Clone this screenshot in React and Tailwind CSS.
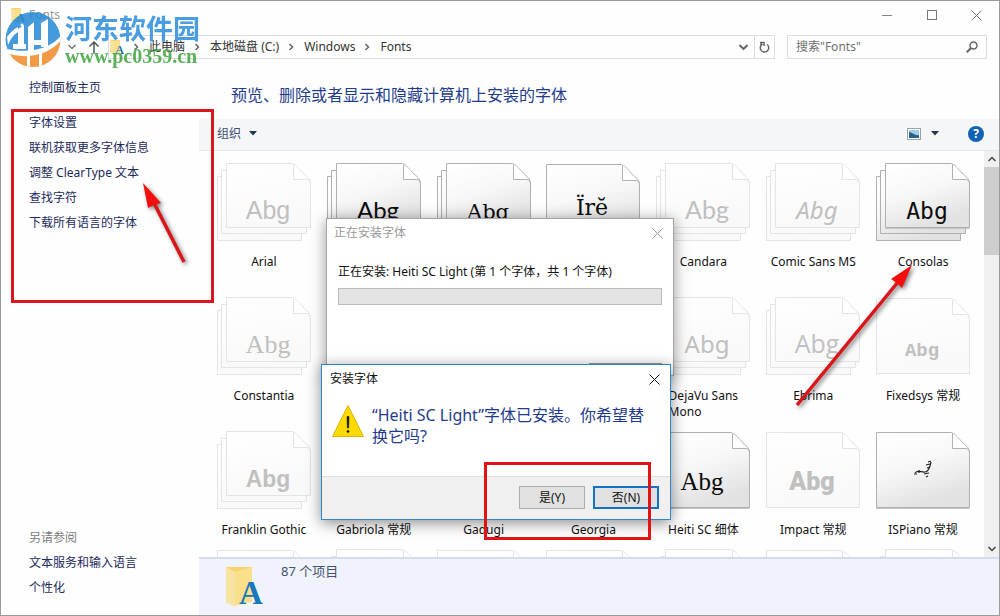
import React from "react";

const tasks = ["字体设置", "联机获取更多字体信息", "调整 ClearType 文本", "查找字符", "下载所有语言的字体"];
const related = ["文本服务和输入语言", "个性化"];
const crumbs = ["此电脑", "本地磁盘 (C:)", "Windows", "Fonts"];

const sans = "'Liberation Sans', sans-serif";
const humanist = "'Noto Sans', sans-serif";
const open = "'Open Sans', sans-serif";
const lato = "Lato, sans-serif";
const serif = "'Liberation Serif', serif";
const slab = "'DejaVu Serif', serif";
const mono = "'Liberation Mono', monospace";

const fonts = [
  { name: "Arial", family: sans, stack: true },
  { name: "Calibri", family: lato, stack: true, active: true, size: 24 },
  { name: "Cambria", family: slab, stack: true, active: true, size: 21 },
  { name: "Cambria\nMath 常规", family: slab, active: true, sample: "Ïrĕ", size: 22, baseline: 52 },
  { name: "Candara", family: lato, stack: true },
  { name: "Comic Sans MS", family: humanist, stack: true, italic: true, size: 24 },
  { name: "Consolas", family: "'DejaVu Sans Mono', monospace", stack: true, active: true, size: 23, bold: false },
  { name: "Constantia", family: serif, stack: true, size: 26 },
  { name: "Corbel", family: lato, stack: true },
  { name: "Courier New", family: mono, stack: true },
  { name: "DejaVu Sans", family: humanist, stack: true },
  { name: "DejaVu Sans\nMono", family: humanist, stack: true, size: 24 },
  { name: "Ebrima", family: open, stack: true },
  { name: "Fixedsys 常规", family: mono, bold: true, size: 19 },
  { name: "Franklin Gothic", family: sans, stack: true, bold: true, size: 23 },
  { name: "Gabriola 常规", family: serif },
  { name: "Gadugi", family: open, stack: true },
  { name: "Georgia", family: serif, stack: true },
  { name: "Heiti SC 细体", family: serif, active: true, size: 25 },
  { name: "Impact 常规", family: "Roboto, sans-serif", heavy: true, size: 25 },
  { name: "ISPiano 常规", active: true, piano: true },
  { name: "Javanese Text", family: serif },
  { name: "Leelawadee UI", family: open, stack: true },
  { name: "Lucida Console", family: mono },
  { name: "Lucida Sans", family: sans },
  { name: "Malgun Gothic", family: sans, stack: true },
  { name: "Marlett 常规", family: sans },
  { name: "Microsoft YaHei", family: sans, stack: true },
];

function FontIcon({ font }) {
  const line = font.active ? "#b0b0b0" : "#e4e4e4";
  const fill = font.active ? "url(#paper)" : "url(#paperLight)";
  const ink = font.active ? "#0c0c0c" : "#c0c0c0";
  const weight = font.heavy ? 900 : font.bold ? 700 : 400;
  const drop = font.stack ? 0 : 1;
  return (
    <svg width="94" height="80" viewBox="0 0 94 80" aria-hidden="true">
      <defs>
        <linearGradient id="paper" x1="0" y1="0" x2="0.4" y2="1">
          <stop offset="0" stopColor="#ffffff" />
          <stop offset="0.5" stopColor="#f8f8f8" />
          <stop offset="1" stopColor="#e2e2e2" />
        </linearGradient>
        <linearGradient id="paperLight" x1="0" y1="0" x2="0.3" y2="1">
          <stop offset="0" stopColor="#ffffff" />
          <stop offset="1" stopColor="#f9f9f9" />
        </linearGradient>
      </defs>
      <g fill={fill} stroke={line}>
        {font.stack ? (
          <>
            <path d="M.5 13.500H72L84.500 29V77.500H.5Z" />
            <path d="M4.500 7.500H75L89.500 23V70.500H4.500Z" />
            <path d="M9.500.5H75.500C80 2.500 83 6.500 86 10C89 13 93.500 15 93.500 21V64.500H9.500Z" />
          </>
        ) : (
          <path d="M.5 1.500H75.500C80 3.500 83 7.500 86 11C89 14 93.500 16 93.500 22V76.500H.5Z" />
        )}
      </g>
      <g transform={`translate(0 ${drop})`}>
        <path d="M76.500 1.500V16.500H90C92 17 93 18 93.500 20" fill="none" stroke={line} />
        <path d="M77 2V16H90C87 13 86 11 84 8.500C82 6 80 4 77 2Z" fill="#fff" />
      </g>
      {font.active && <path d={font.stack ? "M9 65.500H93.500" : "M0 77.500H93.500"} stroke="#c4c4c4" />}
      {font.piano ? (
        <g stroke="#222" fill="none">
          <path d="M39 42C42 38 46 42 49 41C51 41 53 38 54 35L55 31" strokeWidth="1.200" />
          <path d="M38 43h3M43 39v3M50 34l4-1M51 37l3-1M48 43l5-1M50 46l2-1M52 31l3-1" strokeWidth="1.200" />
        </g>
      ) : (
        <text
          x={font.stack ? 51 : 46}
          y={font.baseline || (font.stack ? 56 : 59)}
          textAnchor="middle"
          fill={ink}
          fontSize={font.size || 25}
          fontFamily={font.family}
          fontWeight={weight}
          fontStyle={font.italic ? "italic" : "normal"}
        >
          {font.sample || "Abg"}
        </text>
      )}
    </svg>
  );
}

function FolderIcon({ className }) {
  return (
    <svg className={className} viewBox="0 0 38 42" aria-hidden="true">
      <path d="M1 2H27V36H8L1 38Z" fill="#f6d36d" />
      <path d="M9 7L27 2V37L9 41Z" fill="#fae08a" />
      <path d="M1 2L10 7V42L1 37Z" fill="#f9e3a0" />
      <text x="26" y="39" textAnchor="middle" fontSize="33" fontWeight="700" fontFamily="'Liberation Serif', serif" fill="#1878b8">A</text>
    </svg>
  );
}

function Chevron({ className, down }) {
  return (
    <svg className={className} width="8" height="8" viewBox="0 0 8 8" fill="none" stroke="currentColor" strokeWidth="1.500" aria-hidden="true">
      <path d={down ? "M.5 2L4 5.500L7.500 2" : "M2.500 1L5.500 4L2.500 7"} />
    </svg>
  );
}

function Caret() {
  return (
    <svg width="8" height="5" viewBox="0 0 8 5" aria-hidden="true">
      <path d="M0 0H8L4 4.500Z" fill="#22334f" />
    </svg>
  );
}

function Cross({ size }) {
  return (
    <svg width={size} height={size} viewBox="0 0 11 11" stroke="currentColor" fill="none" aria-hidden="true">
      <path d="M.5.5L10.500 10.500M10.500.5L.5 10.500" />
    </svg>
  );
}

function Watermark() {
  return (
    <div className="pointer-events-none absolute top-2.5 left-1 flex gap-0.5 opacity-85">
      <svg width="58" height="58" viewBox="0 0 58 58" aria-hidden="true">
        <defs>
          <clipPath id="disc"><circle cx="28" cy="28.500" r="27.500" /></clipPath>
        </defs>
        <g clipPath="url(#disc)">
          <path d="M0 0H58V22C50 34 30 44 2 38L0 30Z" fill="#2489d4" />
          <path d="M58 27C47 42 26 49 5 43L10 58H58Z" fill="#f08a28" />
          <path d="M2 26C6 21 9 18 13 16V21C8 24 5 29 3 34Z" fill="#fff" />
          <path d="M13 18L19 14V35H13Z" fill="#fff" />
          <path d="M23 16L29 11V29H36V12L43 8V36H36V34H29V40H23Z" fill="#fff" />
          <path d="M8 33H21V38H8Z" fill="#fff" />
          <path d="M22 40H25V58H22ZM34 38H37V58H34Z" fill="#fff" />
        </g>
        <circle cx="17" cy="14" r="1.500" fill="#fff" />
      </svg>
      <div className="flex flex-col pt-1">
        <span className="text-[27px] leading-7 font-bold text-[#2a8ddb]">河东软件园</span>
        <span className="pt-px font-['Liberation_Serif',serif] text-[20px] leading-6 font-bold text-[#3fa43f]">www.pc0359.cn</span>
      </div>
    </div>
  );
}

function TitleBar() {
  return (
    <header className="flex h-[34px] shrink-0 items-start justify-between">
      <div className="flex items-center gap-1 pt-1.5 pl-2.5 text-[#999]">
        <FolderIcon className="h-4 w-[14px]" />
        <h1>Fonts</h1>
      </div>
      <div className="flex h-7 text-[#777]">
        <button aria-label="最小化" className="flex w-[45px] items-center justify-center">
          <span className="h-px w-2.5 bg-[#888]" />
        </button>
        <button aria-label="最大化" className="flex w-[45px] items-center justify-center">
          <span className="size-2.5 border border-[#777]" />
        </button>
        <button aria-label="关闭" className="flex w-[45px] items-center justify-center">
          <Cross size={11} />
        </button>
      </div>
    </header>
  );
}

function AddressRow() {
  return (
    <div className="flex h-6 shrink-0 items-stretch gap-2 pr-3 pl-[67px] text-[#333]">
      <div className="flex items-center gap-3 text-[#777]">
        <button aria-label="最近浏览的位置"><Chevron down /></button>
        <button aria-label="上移">
          <svg width="12" height="12" viewBox="0 0 12 12" fill="none" stroke="#555" strokeWidth="1.500" aria-hidden="true">
            <path d="M6 12V1M1.500 5.500L6 1L10.500 5.500" />
          </svg>
        </button>
      </div>
      <nav aria-label="地址" className="mr-1 flex min-w-0 flex-1 items-center border border-[#dcdcdc]">
        <FolderIcon className="ml-px h-4 w-[14px]" />
        <ol className="flex flex-1 items-center">
          {crumbs.map((c) => (
            <li key={c} className="flex items-center">
              <Chevron className="mr-[9px] ml-2 text-[#666]" />
              <a href="#top" className="whitespace-nowrap">{c}</a>
            </li>
          ))}
        </ol>
        <button aria-label="展开" className="px-1.5 text-[#666]">
          <svg width="9" height="6" viewBox="0 0 9 6" fill="none" stroke="currentColor" strokeWidth="2" aria-hidden="true"><path d="M.5 1L4.500 5L8.500 1" /></svg>
        </button>
        <button aria-label="刷新" className="flex h-full w-5 items-center justify-center border-l border-[#dcdcdc]">
          <svg width="11" height="12" viewBox="0 0 11 12" fill="none" stroke="#666" strokeWidth="1.500" aria-hidden="true">
            <path d="M8 3.500A4.200 4.200 0 1 1 3.500 3.200" />
            <path d="M2 .8V4.500M1 1.500H5V5" />
          </svg>
        </button>
      </nav>
      <label className="flex w-[200px] items-center border border-[#dcdcdc] px-2">
        <input type="search" aria-label="搜索" placeholder={'搜索"Fonts"'} className="min-w-0 flex-1 outline-none placeholder:text-[#6f6f6f]" />
        <svg width="12" height="12" viewBox="0 0 12 12" fill="none" stroke="#666" strokeWidth="1.500" aria-hidden="true">
          <circle cx="7.500" cy="4.500" r="3.500" />
          <path d="M5 7L.8 11.200" strokeWidth="2" />
        </svg>
      </label>
    </div>
  );
}

function Sidebar() {
  return (
    <aside className="flex w-[198px] shrink-0 flex-col justify-between pt-5 pb-[19px] pl-7 text-[#1d2a5c]">
      <div className="flex flex-col gap-[18px]">
        <a href="#home" className="leading-[17px]">控制面板主页</a>
        <ul className="flex flex-col gap-2 leading-[17px]">
          {tasks.map((t) => (
            <li key={t}><a href="#task">{t}</a></li>
          ))}
        </ul>
      </div>
      <div className="flex flex-col gap-2 leading-[17px]">
        <h2 className="text-[#7c7c7c]">另请参阅</h2>
        {related.map((t) => (
          <a key={t} href="#related">{t}</a>
        ))}
      </div>
    </aside>
  );
}

function Toolbar() {
  return (
    <div className="flex h-8 shrink-0 items-center justify-between border-b border-[#e6e7e8] bg-[#f5f6f7] pr-[15px] pb-0.5 pl-[18px]">
      <button className="flex items-center gap-2 text-[#3f4f6e]">组织 <Caret /></button>
      <div className="flex items-center">
        <button aria-label="更改视图">
          <svg width="14" height="12" viewBox="0 0 14 12" aria-hidden="true">
            <rect x=".5" y=".5" width="13" height="11" fill="#fff" stroke="#9aa3ad" />
            <rect x="2" y="2" width="10" height="8" fill="#9fd0ee" />
            <path d="M2 4C5 4 8 8 12 7V10H2Z" fill="#2d6187" />
          </svg>
        </button>
        <button aria-label="更多选项" className="mr-[29px] ml-2.5"><Caret /></button>
        <button aria-label="帮助" className="flex size-4 items-center justify-center rounded-full bg-[#0f62b4] text-[12px] font-bold text-white">?</button>
      </div>
    </div>
  );
}

function Scrollbar() {
  return (
    <div className="flex w-[15px] shrink-0 flex-col items-center bg-[#f0f0f0] text-[#444]">
      <button aria-label="向上滚动" className="flex h-4 items-center">
        <Chevron down className="rotate-180" />
      </button>
      <div className="flex w-full flex-1 flex-col">
        <div className="h-[88px] w-full bg-[#cdcdcd]" />
      </div>
      <button aria-label="向下滚动" className="flex h-4 items-center">
        <Chevron down />
      </button>
    </div>
  );
}

function ProgressDialog() {
  return (
    <section aria-label="正在安装字体" className="absolute top-[217px] left-[325px] flex h-[158px] w-[348px] flex-col border border-[#a5a5a5] bg-white shadow-[0_2px_14px_rgba(0,0,0,0.4)]">
      <div className="flex h-7 items-center justify-between pr-2.5 pl-[7px] text-[#999]">
        <h2>正在安装字体</h2>
        <button aria-label="关闭"><Cross size={11} /></button>
      </div>
      <div className="flex flex-1 flex-col px-[11px] pt-4 text-[#111]">
        <p className="leading-[17px]">正在安装: Heiti SC Light (第 1 个字体，共 1 个字体)</p>
        <div role="progressbar" aria-label="安装进度" className="mt-2 h-[17px] border border-[#bcbcbc] bg-[#e4e4e4]" />
        <button aria-label="停止" className="mt-[58px] h-3 w-[73px] self-end border border-[#999] bg-[#e1e1e1]" />
      </div>
    </section>
  );
}

function ConfirmDialog() {
  return (
    <section aria-label="安装字体" className="absolute top-[363px] left-[320px] flex w-[350px] flex-col border border-[#2f86c9] bg-white shadow-[0_3px_14px_rgba(0,0,0,0.45)]">
      <div className="flex h-7 items-center justify-between pr-2.5 pl-2 text-[#111]">
        <h2>安装字体</h2>
        <button aria-label="关闭"><Cross size={11} /></button>
      </div>
      <div className="flex h-[83px] items-start gap-2 pt-3 pr-3 pl-2.5">
        <svg width="32" height="32" viewBox="0 0 32 32" className="shrink-0" aria-hidden="true">
          <path d="M16 .5L31.500 31.500H.5Z" fill="#fddb00" stroke="#e0b400" strokeWidth="1" strokeLinejoin="round" />
          <path d="M15 11.500H17L16.700 23H15.300Z" fill="#111" stroke="#111" strokeWidth=".5" />
          <circle cx="16" cy="26.500" r="1.300" fill="#111" />
        </svg>
        <p className="text-[16px] leading-[21px] text-[#1f3c8c]">“Heiti SC Light”字体已安装。你希望替<br />换它吗?</p>
      </div>
      <div className="flex justify-end gap-2 border-t border-[#dfdfdf] bg-[#f0f0f0] pt-[9px] pr-[11px] pb-2.5 text-[#111]">
        <button className="h-[23px] w-[66px] border border-[#adadad] bg-[#e1e1e1]">是(Y)</button>
        <button className="h-[23px] w-[66px] border-2 border-[#0f74c8] bg-[#e1e1e1]">否(N)</button>
      </div>
    </section>
  );
}

function Annotations() {
  return (
    <div className="pointer-events-none absolute inset-0">
      <div className="absolute top-[108px] left-[10px] h-[194px] w-[203px] border-3 border-[#d8161b]" />
      <div className="absolute top-[461px] left-[483px] h-[78px] w-[167px] border-3 border-[#e01418]" />
      <svg className="absolute top-[175px] left-[134px] drop-shadow-[2px_2px_2px_rgba(0,0,0,0.5)]" width="60" height="94" viewBox="135 176 60 94" aria-hidden="true">
        <path d="M154 203L184 262" stroke="#d9151a" strokeWidth="3.500" />
        <path d="M143 183L161 203L154 205L148 208Z" fill="#f40d0d" />
      </svg>
      <svg className="absolute top-[257px] left-[787px] drop-shadow-[2px_2px_2px_rgba(0,0,0,0.5)]" width="134" height="156" viewBox="788 258 134 156" aria-hidden="true">
        <path d="M797 405L898 282" stroke="#d9151a" strokeWidth="3.500" />
        <path d="M912 265L902 288L897 283L891 279Z" fill="#f40d0d" />
      </svg>
    </div>
  );
}

export default function App() {
  return (
    <div className="relative flex h-screen w-full flex-col overflow-hidden border border-[#9b9b9b] bg-[#fefefe] font-['Noto_Sans','Noto_Sans_CJK_SC',sans-serif] text-[12px] leading-4">
      <TitleBar />
      <AddressRow />
      <div className="flex min-h-0 flex-1">
        <Sidebar />
        <main className="flex min-w-0 flex-1 flex-col">
          <h2 className="flex h-[60px] shrink-0 items-center pt-3 pl-8 text-[16px] text-[#1f3c8c]">预览、删除或者显示和隐藏计算机上安装的字体</h2>
          <Toolbar />
          <div className="flex min-h-0 flex-1">
            <ul className="grid min-w-0 flex-1 grid-cols-7 content-start gap-y-2.5 overflow-hidden pt-3 pr-1.5 pl-2.5">
              {fonts.map((f) => (
                <li key={f.name} className="flex flex-col items-center gap-[11px] text-[#111]">
                  <FontIcon font={f} />
                  <span className="pb-px whitespace-pre">{f.name}</span>
                </li>
              ))}
            </ul>
            <Scrollbar />
          </div>
          <footer className="flex h-[58px] shrink-0 items-start border-t-2 border-[#d3deea] bg-[#f0f3fb] pt-1 pl-[26px] text-[#44536f]">
            <FolderIcon className="h-[44px] w-[38px] pt-0.5" />
            <p className="pl-[18px] text-[13px] leading-4">87 个项目</p>
          </footer>
        </main>
      </div>
      <ProgressDialog />
      <ConfirmDialog />
      <Annotations />
      <Watermark />
    </div>
  );
}
